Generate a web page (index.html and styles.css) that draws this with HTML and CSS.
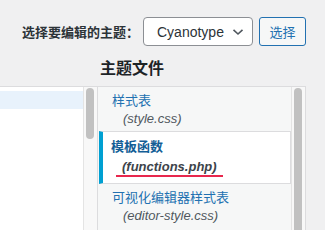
FILE: index.html
```html
<!DOCTYPE html>
<html lang="zh-CN">
<head>
    <meta charset="UTF-8">
    <meta name="viewport" content="width=device-width, initial-scale=1.0">
    <title>编辑主题</title>
    <link rel="stylesheet" href="styles.css">
</head>
<body>
    <div class="theme-pick">
        <label class="pick-label">选择要编辑的主题：</label>
        <div class="select-box">
            <span>Cyanotype</span>
            <svg class="chevron" width="12" height="8" viewBox="0 0 12 8"><path d="M1.5 1.8 L6 6 L10.5 1.8" fill="none" stroke="#50575e" stroke-width="1.6"/></svg>
        </div>
        <button class="pick-button">选择</button>
    </div>

    <h2 class="files-title">主题文件</h2>

    <div class="editor-row">
        <div class="editor">
            <div class="code">
                <div class="code-line active"></div>
            </div>
            <div class="gutter"><div class="thumb short"></div></div>
        </div>
        <div class="file-panel">
            <ul class="files">
                <li class="file">
                    <a href="#">样式表</a>
                    <span class="file-name">(style.css)</span>
                </li>
                <li class="file current">
                    <a href="#">模板函数</a>
                    <span class="file-name">(functions.php)</span>
                </li>
                <li class="file">
                    <a href="#">可视化编辑器样式表</a>
                    <span class="file-name">(editor-style.css)</span>
                </li>
            </ul>
            <div class="gutter"><div class="thumb long"></div></div>
        </div>
    </div>
</body>
</html>
```

FILE: styles.css
```css
body {
    font-family: "Liberation Sans", "Noto Sans CJK SC", sans-serif;
    background-color: #f0f0f1;
    color: #1d2327;
    margin: 0;
    padding: 0;
    height: 230px;
    overflow: hidden;
}
.theme-pick {
    display: flex;
    align-items: center;
    padding: 17px 0 0 22px;
}
.pick-label {
    width: 121px;
    font-size: 13px;
    font-weight: bold;
    color: #2c3338;
}
.select-box {
    box-sizing: border-box;
    width: 110px;
    height: 29px;
    display: flex;
    align-items: center;
    justify-content: space-between;
    padding: 0 8px 0 13px;
    background-color: #fff;
    border: 1px solid #8c8f94;
    border-radius: 4px;
    font-size: 14px;
    color: #2c3338;
}
.chevron {
    margin-top: 1px;
}
.pick-button {
    box-sizing: border-box;
    width: 47px;
    height: 29px;
    margin-left: 6px;
    padding: 0;
    background-color: #f6f7f7;
    border: 1px solid #2271b1;
    border-radius: 3px;
    color: #2271b1;
    font-family: "Liberation Sans", "Noto Sans CJK SC", sans-serif;
    font-size: 13px;
}
.files-title {
    margin: 12px 0 0 0;
    padding-left: 100px;
    font-size: 16px;
    line-height: 22px;
    color: #1d2327;
}
.editor-row {
    display: flex;
    margin-top: 6px;
    height: 144px;
    overflow: hidden;
}
.editor {
    display: flex;
    width: 97px;
    border-top: 1px solid #dcdcde;
    border-right: 1px solid #dcdcde;
}
.code {
    flex: 1;
    background-color: #fff;
    padding-top: 4px;
}
.code-line {
    height: 18px;
}
.code-line.active {
    background-color: #e8f2fc;
}
.gutter {
    width: 13px;
    background-color: #f8f8f8;
    border-left: 1px solid #e4e4e4;
    padding-top: 1px;
}
.thumb {
    width: 8px;
    margin-left: 2px;
    background-color: #c1c1c1;
    border-radius: 4px;
}
.thumb.short {
    height: 51px;
}
.thumb.long {
    height: 160px;
}
.file-panel {
    display: flex;
    width: 207px;
    border-top: 1px solid #dcdcde;
    border-right: 1px solid #dcdcde;
}
.files {
    flex: 1;
    list-style: none;
    margin: 0;
    padding: 0;
    background-color: #f6f7f7;
}
.file {
    padding: 5px 0 3px 14px;
    font-size: 13px;
    line-height: 18px;
}
.file a {
    display: block;
    color: #2271b1;
    text-decoration: none;
}
.file-name {
    display: block;
    padding-left: 11px;
    font-style: italic;
    color: #50575e;
}
.file.current {
    padding: 6px 0 6px 8px;
    background-color: #fff;
    border: 1px solid #dcdcde;
    border-left: 4px solid #00a0d2;
    margin-left: 1px;
}
.file.current a {
    font-weight: bold;
    color: #135e96;
}
.file.current .file-name {
    display: inline-block;
    margin-top: 2px;
    padding: 0 6px 0 6px;
    margin-left: 5px;
    font-weight: bold;
    color: #3c434a;
    border-bottom: 2px solid #e8274d;
    line-height: 17px;
}
```
